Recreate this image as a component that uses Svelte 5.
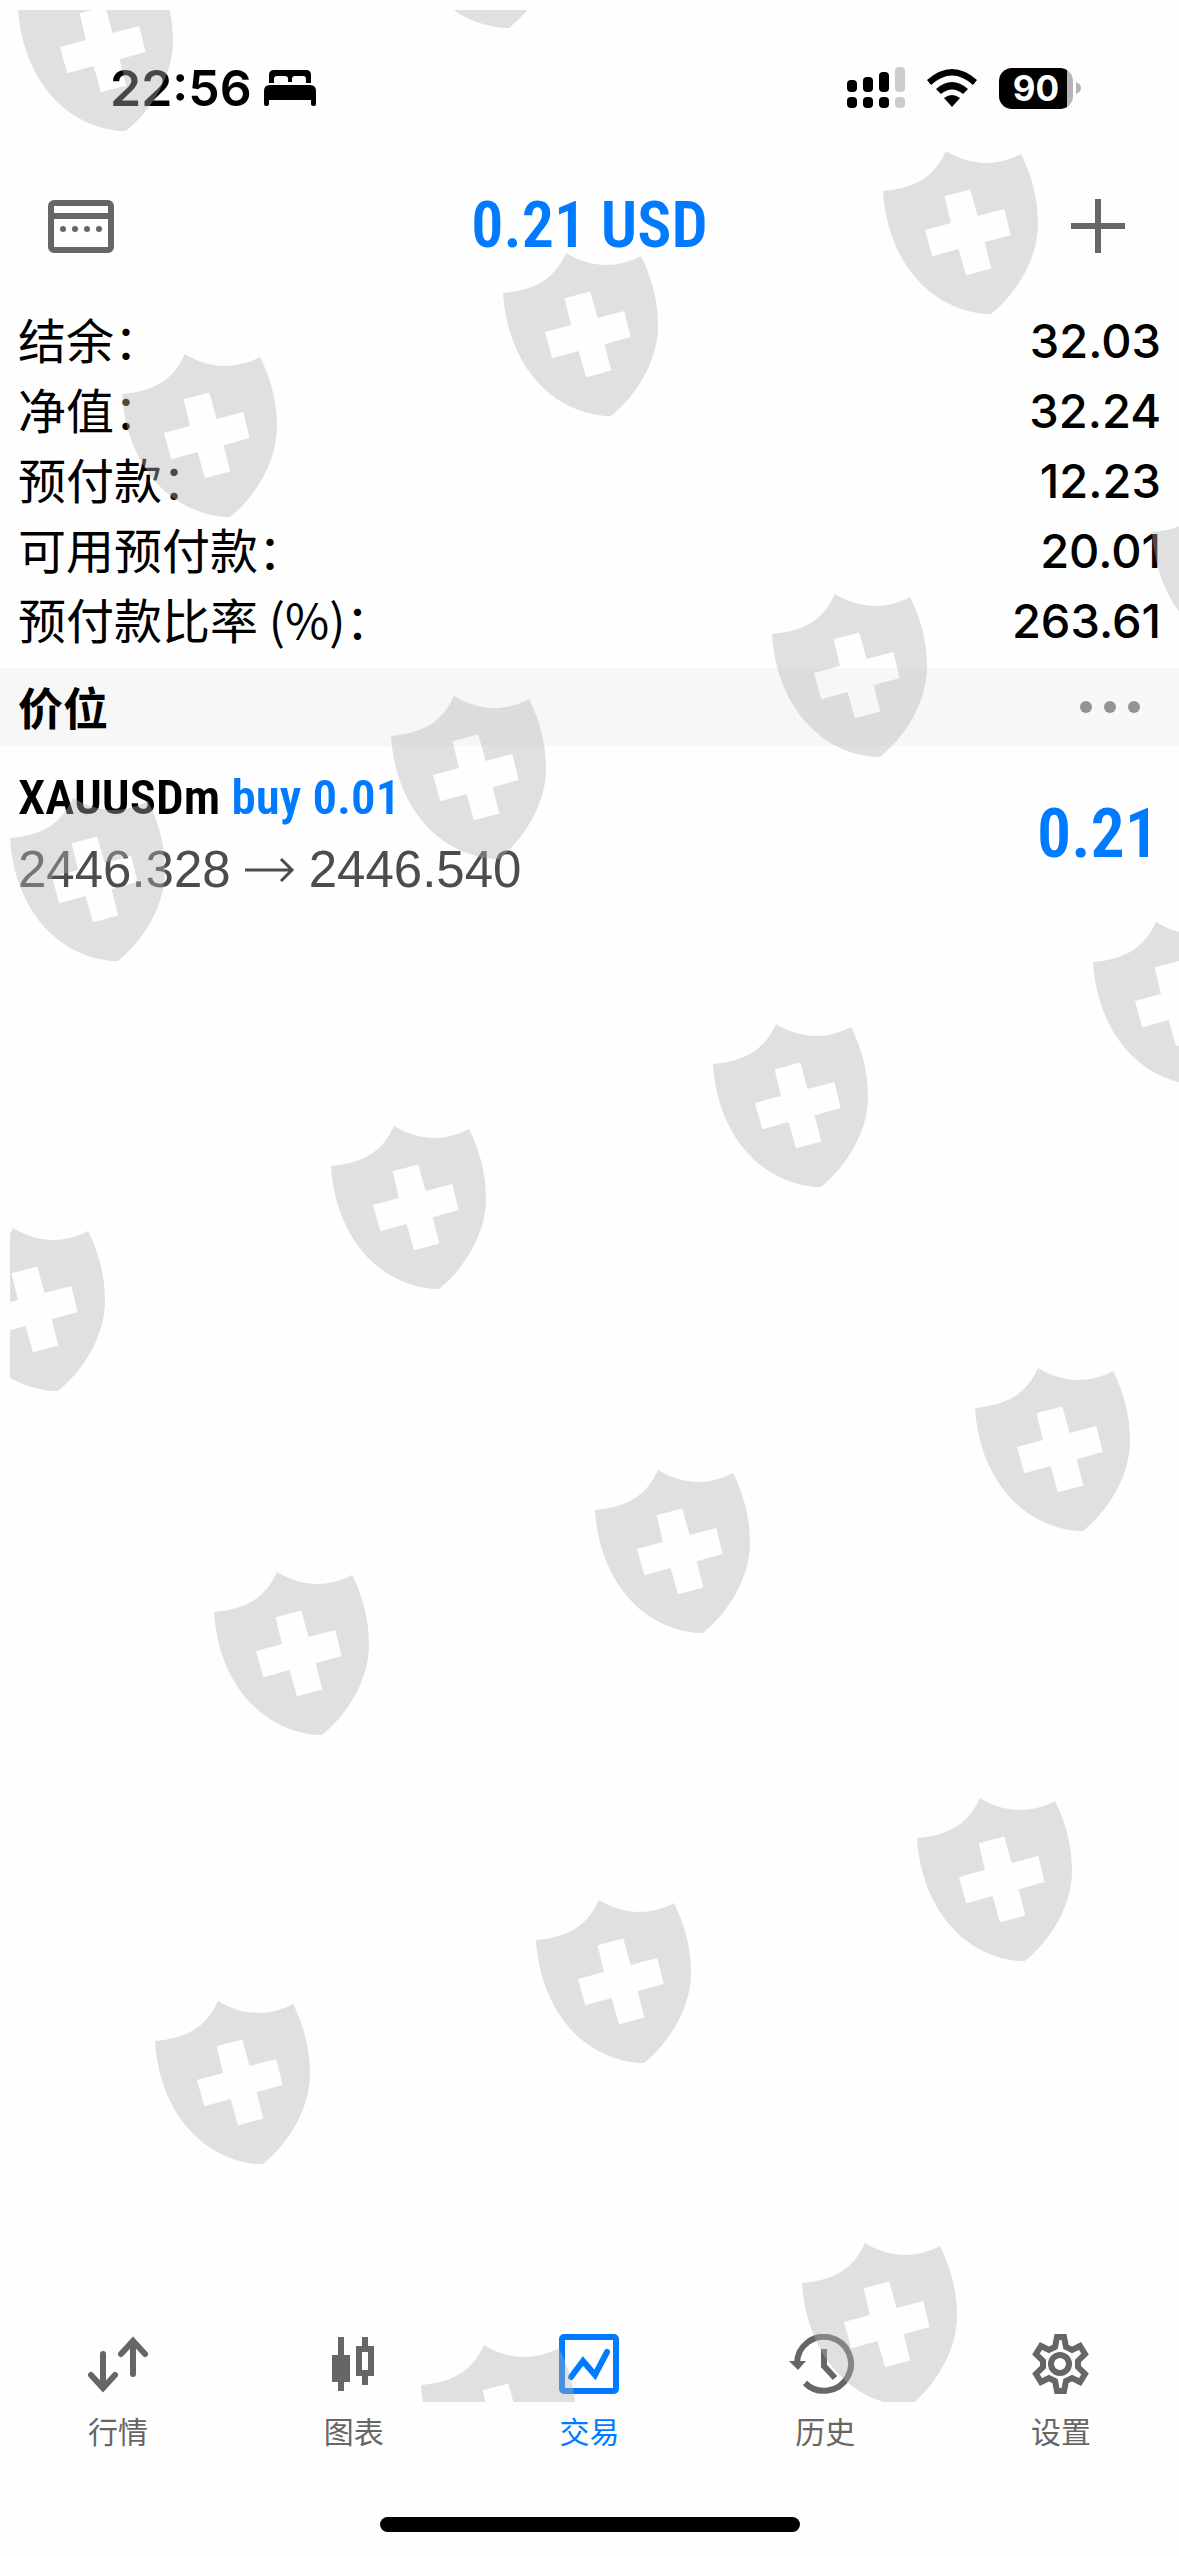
<script>
  const summary = [
    { label: "结余：", value: "32.03" },
    { label: "净值：", value: "32.24" },
    { label: "预付款：", value: "12.23" },
    { label: "可用预付款：", value: "20.01" },
    { label: "预付款比率 (%)：", value: "263.61" },
  ];

  const positions = [
    {
      symbol: "XAUUSDm",
      side: "buy",
      volume: "0.01",
      open: "2446.328",
      current: "2446.540",
      profit: "0.21",
    },
  ];

  const tabs = [
    { id: "quotes", label: "行情" },
    { id: "charts", label: "图表" },
    { id: "trade", label: "交易" },
    { id: "history", label: "历史" },
    { id: "settings", label: "设置" },
  ];

  let activeTab = "trade";

  // top left corner of every shield in the overlay
  const shields = [
    [18, -32],
    [401, -135],
    [122, 354],
    [503, 253],
    [883, 151],
    [10, 798],
    [391, 696],
    [772, 594],
    [1152, 492],
    [-50, 1228],
    [331, 1126],
    [713, 1024],
    [1093, 922],
    [214, 1572],
    [595, 1470],
    [975, 1368],
    [155, 2001],
    [536, 1900],
    [917, 1798],
    [421, 2345],
    [802, 2243],
  ];
</script>

<div class="screen">
  <div class="status">
    <div class="status-left">
      <span class="time">22:56</span>
      <svg width="52" height="36" viewBox="0 0 52 36" aria-hidden="true">
        <path d="M5 13V5q0-5 5-5h32q5 0 5 5v8h-5V9q0-3-3-3H31q-3 0-3 3v3h-4V9q0-3-3-3h-8q-3 0-3 3v4z" />
        <path d="M0 21q0-6 6-6h40q6 0 6 6v13q0 2-2 2h-1q-2 0-2-2v-4H5v4q0 2-2 2H2q-2 0-2-2z" />
      </svg>
    </div>
    <div class="status-right">
      <svg width="58" height="42" viewBox="0 0 58 42" aria-hidden="true">
        <rect x="0" y="13" width="10" height="12" rx="4" />
        <rect x="16" y="10" width="10" height="15" rx="4" />
        <rect x="32" y="5" width="10" height="20" rx="4" />
        <rect x="48" y="0" width="10" height="25" rx="4" fill="#ccc" />
        <rect x="0" y="30" width="10" height="11" rx="4" />
        <rect x="16" y="30" width="10" height="11" rx="4" />
        <rect x="32" y="30" width="10" height="11" rx="4" />
        <rect x="48" y="30" width="10" height="11" rx="4" fill="#ccc" />
      </svg>
      <svg width="50" height="38" viewBox="0 0 50 38" aria-hidden="true">
        <path d="M0 11Q25-11 50 11l-4 5Q25-3 4 16z" />
        <path d="M9 20Q25 6 41 20l-5 5Q25 16 14 25z" />
        <path d="M17 29q8-6 16 0l-8 9z" />
      </svg>
      <div class="battery">
        <span class="level">90</span>
        <svg width="5" height="12" viewBox="0 0 5 12" aria-hidden="true">
          <path d="M0 0q5 2 5 6t-5 6z" fill="#b5b5b5" />
        </svg>
      </div>
    </div>
  </div>

  <header>
    <button type="button" aria-label="日历">
      <svg width="66" height="54" viewBox="0 0 66 54" aria-hidden="true">
        <rect x="3" y="4" width="60" height="47" rx="3" class="line" />
        <path d="M3 17h60" class="line" />
        <circle cx="15" cy="30" r="3" />
        <circle cx="27" cy="30" r="3" />
        <circle cx="39" cy="30" r="3" />
        <circle cx="51" cy="30" r="3" />
      </svg>
    </button>
    <h1>0.21 USD</h1>
    <button type="button" class="add" aria-label="新订单">
      <svg width="54" height="54" viewBox="0 0 54 54" aria-hidden="true">
        <path d="M27 0v54M0 27h54" class="line" />
      </svg>
    </button>
  </header>

  <dl class="summary">
    {#each summary as row}
      <div class="row">
        <dt>{row.label}</dt>
        <dd>{row.value}</dd>
      </div>
    {/each}
  </dl>

  <div class="section">
    <h2>价位</h2>
    <button type="button" aria-label="更多">
      <svg width="60" height="12" viewBox="0 0 60 12" aria-hidden="true">
        <circle cx="6" cy="6" r="6" />
        <circle cx="30" cy="6" r="6" />
        <circle cx="54" cy="6" r="6" />
      </svg>
    </button>
  </div>

  <main>
    {#each positions as position}
      <div class="position">
        <div>
          <div class="symbol">
            {position.symbol} <span class="blue">{position.side} {position.volume}</span>
          </div>
          <div class="prices">
            <span>{position.open}</span>
            <svg width="50" height="26" viewBox="0 0 50 26" aria-hidden="true">
              <path d="M0 13h47M36 2l11 11-11 11" />
            </svg>
            <span>{position.current}</span>
          </div>
        </div>
        <div class="profit">{position.profit}</div>
      </div>
    {/each}
  </main>

  <nav>
    {#each tabs as tab}
      <a
        href={"#" + tab.id}
        class:active={tab.id === activeTab}
        on:click={() => (activeTab = tab.id)}
      >
        <svg width="72" height="60" viewBox="0 0 72 60" aria-hidden="true">
          {#if tab.id === "quotes"}
            <path d="M21 20v34M9 41l12 13 12-13M51 40V7M39 20L51 7l12 13" class="line round" />
          {:else if tab.id === "charts"}
            <path d="M20 3h6v18h6v27h-6v9h-6v-9h-6V21h6z" />
            <path d="M44 3h6v9h6v30h-6v9h-6v-9h-6V12h6zm0 15v18h6V18z" fill-rule="evenodd" />
          {:else if tab.id === "trade"}
            <rect x="9" y="3" width="54" height="54" rx="2" class="line" />
            <path d="M18 43l12-16 12 14 12-23" class="line round" />
          {:else if tab.id === "history"}
            <path d="M16 49A27 27 0 1 0 8 30" class="line" />
            <path d="M0 27h17l-8 9z" />
            <path d="M35 15v17l11 12" class="line" />
          {:else}
            <path
              d="M32 3h7l2 10 6 3 8-4 5 8-7 7v6l7 7-5 8-8-4-6 3-2 10h-7l-2-10-6-3-8 4-5-8 7-7v-6l-7-7 5-8 8 4 6-3z"
              class="line"
            />
            <circle cx="35" cy="30" r="9" class="line" />
          {/if}
        </svg>
        {tab.label}
      </a>
    {/each}
  </nav>
  <div class="home"></div>

  <div class="overlay" aria-hidden="true">
    <svg width="100%" height="100%">
      {#each shields as [x, y]}
        <path
          transform={`translate(${x - 10} ${y - 10})`}
          fill-rule="evenodd"
          d="M63 0C82 12 110 18 138 3C149 25 155 48 155 73C155 108 133 143 108 163L102 163C42 157 4 105 0 40C35 37 52 24 63 0ZM61.6 45.3L68 72L42 79L49.3 105.3L75.6 98L83 124.3L108.3 117.6L101.6 91.3L127.6 84L121.3 58L94.6 65L87.3 38.6Z"
        />
      {/each}
    </svg>
  </div>
</div>

<style>
  :global(body) {
    margin: 0;
    background: #fefefe;
  }

  .screen {
    position: relative;
    display: flex;
    flex-direction: column;
    min-height: 100vh;
    overflow: hidden;
    color: #000;
    font-family: Inter, "Noto Sans CJK SC", sans-serif;
  }

  .overlay {
    position: absolute;
    top: 10px;
    right: 0;
    bottom: 154px;
    left: 10px;
    overflow: hidden;
    pointer-events: none;
  }
  .overlay svg {
    display: block;
    fill: rgba(180, 180, 180, 0.4);
  }

  button {
    display: flex;
    padding: 0;
    border: none;
    background: none;
    color: #666;
  }

  svg {
    fill: currentColor;
  }
  .line {
    fill: none;
    stroke: currentColor;
    stroke-width: 6;
  }
  .round {
    stroke-linecap: round;
  }

  .status {
    display: flex;
    align-items: center;
    justify-content: space-between;
    height: 176px;
    padding: 0 98px 0 110px;
  }
  .status-left,
  .status-right,
  .battery {
    display: flex;
    align-items: center;
  }
  .status-left {
    gap: 12px;
  }
  .status-right {
    gap: 22px;
  }
  .time {
    font-size: 50px;
    font-weight: 600;
  }
  .battery {
    gap: 3px;
  }
  .level {
    width: 74px;
    border-radius: 13px;
    background: linear-gradient(to right, #000 68px, #b5b5b5 68px);
    color: #fff;
    font-size: 35px;
    font-weight: 700;
    line-height: 41px;
    text-align: center;
  }

  header {
    display: grid;
    grid-template-columns: 1fr auto 1fr;
    align-items: center;
    height: 100px;
    padding: 0 48px;
  }
  .add {
    justify-self: end;
    padding-right: 6px;
  }
  h1 {
    margin: 0;
    color: #007aff;
    font-size: 64px;
    line-height: 96px;
  }
  h1,
  .symbol,
  .profit {
    font-family: "Avenir Next Condensed", "Roboto Condensed", "Noto Sans CJK SC", sans-serif;
    font-weight: 600;
  }

  .summary {
    margin: 0;
    padding: 30px 18px 12px;
  }
  .row {
    display: flex;
    justify-content: space-between;
    height: 70px;
  }
  dt {
    font-family: "Noto Sans CJK SC", sans-serif;
    font-size: 48px;
    line-height: 64px;
  }
  dd {
    margin: 0;
    font-size: 47px;
    font-weight: 500;
    line-height: 70px;
  }

  .section {
    display: flex;
    align-items: center;
    justify-content: space-between;
    height: 78px;
    padding: 0 39px 0 18px;
    background: #f7f7f7;
  }
  h2 {
    margin: 0;
    font-family: "Noto Sans CJK SC", sans-serif;
    font-size: 45px;
    font-weight: 700;
    line-height: 66px;
  }
  .section button {
    color: #949494;
  }

  main {
    flex: 1;
  }
  .position {
    display: flex;
    align-items: center;
    justify-content: space-between;
    padding: 16px 20px 16px 18px;
    line-height: 72px;
  }
  .symbol {
    font-size: 49px;
  }
  .profit {
    font-size: 68px;
  }
  .blue,
  .profit {
    color: #007aff;
  }
  .prices {
    display: flex;
    align-items: center;
    gap: 14px;
    color: #4b4b50;
    font-family: "Liberation Sans", sans-serif;
    font-size: 51px;
  }
  .prices path {
    fill: none;
    stroke: currentColor;
    stroke-width: 3;
  }

  nav {
    display: flex;
  }
  a {
    display: flex;
    flex: 1;
    flex-direction: column;
    align-items: center;
    gap: 16px;
    color: #666;
    font-family: "Noto Sans CJK SC", sans-serif;
    font-size: 30px;
    line-height: 40px;
    text-decoration: none;
  }
  .active {
    color: #007aff;
  }

  .home {
    width: 420px;
    height: 15px;
    margin: 67px auto 24px;
    border-radius: 8px;
    background: #000;
  }
</style>
